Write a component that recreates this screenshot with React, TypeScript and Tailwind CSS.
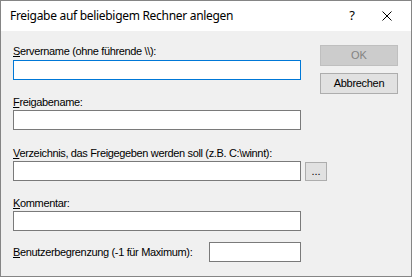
import React from 'react';

const labelFont = { fontFamily: '"Liberation Sans", Arial, sans-serif' };

function Label({ accel, rest }: { accel: string; rest: string }) {
  return (
    <div
      className="h-[13px] text-[11px] leading-[13px] tracking-[-0.35px] text-black whitespace-nowrap"
      style={labelFont}>
      <span className="underline underline-offset-[1px]">{accel}</span>
      {rest}
    </div>
  );
}

function TextBox({ focused, className = '' }: { focused?: boolean; className?: string }) {
  return (
    <div
      className={`h-[20px] bg-white border ${focused ? 'border-[#0078d7]' : 'border-[#7a7a7a]'} ${className}`}
    />
  );
}

export default function App() {
  return (
    <div className="w-[412px] h-[277px] border border-[#858585] bg-[#f0f0f0] flex flex-col overflow-hidden">
      {/* Title bar */}
      <div className="h-[30px] bg-white flex items-center shrink-0">
        <span
          className="pl-[9px] text-[12px] tracking-[-0.3px] text-black whitespace-nowrap"
          style={{ fontFamily: '"Noto Sans", "Open Sans", sans-serif' }}>
          Freigabe auf beliebigem Rechner anlegen
        </span>
        <span
          className="ml-auto mr-[27px] text-[13px] text-black"
          style={{ fontFamily: '"Noto Sans", sans-serif' }}>
          ?
        </span>
        <svg width="10" height="10" viewBox="0 0 10 10" className="mr-[19px]">
          <path d="M0.5 0.5 L9.5 9.5 M9.5 0.5 L0.5 9.5" stroke="#000" strokeWidth="1" fill="none" />
        </svg>
      </div>

      {/* Body */}
      <div className="flex pl-[12px] pt-[14px]">
        <div className="w-[288px] flex flex-col">
          <Label accel="S" rest="ervername (ohne führende \\):" />
          <TextBox focused className="mt-[2px]" />

          <div className="mt-[16px]">
            <Label accel="F" rest="reigabename:" />
          </div>
          <TextBox className="mt-[1px]" />

          <div className="mt-[17px]">
            <Label accel="V" rest="erzeichnis, das Freigegeben werden soll (z.B. C:\winnt):" />
          </div>
          <div className="mt-[1px] flex">
            <TextBox className="w-[288px] shrink-0" />
            <div className="shrink-0 ml-[4px] mt-[1px] w-[22px] h-[19px] bg-[#e1e1e1] border border-[#adadad] flex items-end justify-center pb-[3px]">
              <span className="text-[11px] leading-[11px]" style={labelFont}>...</span>
            </div>
          </div>

          <div className="mt-[16px]">
            <Label accel="K" rest="ommentar:" />
          </div>
          <TextBox className="mt-[1px]" />

          <div className="mt-[11px] flex items-center">
            <Label accel="B" rest="enutzerbegrenzung (-1 für Maximum):" />
            <TextBox className="ml-auto w-[92px]" />
          </div>
        </div>

        <div className="ml-[19px] flex flex-col gap-[7px]">
          <div
            className="w-[78px] h-[21px] bg-[#cccccc] border border-[#bfbfbf] flex items-center justify-center text-[11px] text-[#838383]"
            style={labelFont}>
            OK
          </div>
          <div
            className="w-[78px] h-[21px] bg-[#e1e1e1] border border-[#adadad] flex items-center justify-center text-[11px] tracking-[-0.3px] text-black"
            style={labelFont}>
            Abbrechen
          </div>
        </div>
      </div>
    </div>
  );
}
